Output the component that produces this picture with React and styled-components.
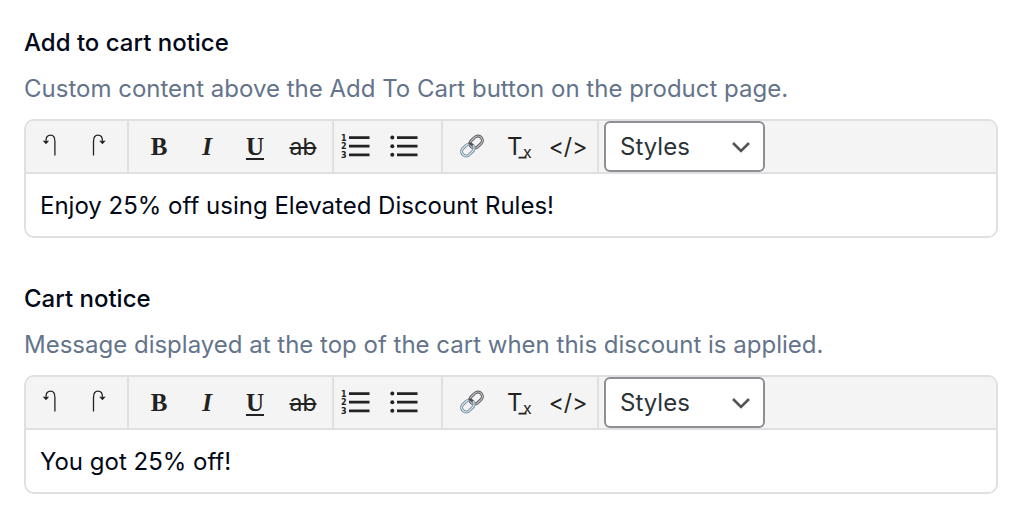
import { useId, useState } from "react";
import styled, { createGlobalStyle } from "styled-components";

const UndoIcon = () => (
    <Icon width="28" height="29" viewBox="0 0 28 29">
        <path d="M18.9 23.5V9.5C18.9 5.5 17.2 3.2 14.7 3.2C12 3.2 10 5.2 10 8.8" strokeWidth="1.3" />
        <path d="M6.7 8.8H13.1L10 12.3Z" fill="currentColor" stroke="none" />
    </Icon>
)

const RedoIcon = () => (
    <Icon width="28" height="29" viewBox="0 0 28 29">
        <path d="M9.5 23.5V9.5C9.5 5.5 11.5 3.2 14 3.2C16.7 3.2 18.4 5.2 18.4 8.8" strokeWidth="1.3" />
        <path d="M15.3 8.8H21.7L18.4 12.3Z" fill="currentColor" stroke="none" />
    </Icon>
)

const OrderedIcon = () => (
    <Icon width="36" height="29" viewBox="0 0 36 29">
        <path d="M9 5.6H29.5M9 14.2H29.5M9 22.8H29.5" strokeWidth="2.8" />
        <g fill="currentColor" stroke="none" fontFamily="DejaVu Sans, sans-serif" fontWeight="700" fontSize="8">
            <text x="1" y="9">1</text>
            <text x="1" y="17">2</text>
            <text x="1" y="26">3</text>
        </g>
    </Icon>
)

const BulletIcon = () => (
    <Icon width="36" height="29" viewBox="0 0 36 29">
        <path d="M9 5.6H29.5M9 14.2H29.5M9 22.8H29.5" strokeWidth="2.8" />
        <g fill="currentColor" stroke="none">
            <circle cx="4.3" cy="5.6" r="2" />
            <circle cx="4.3" cy="14.2" r="2" />
            <circle cx="4.3" cy="22.8" r="2" />
        </g>
    </Icon>
)

const LinkIcon = () => (
    <Icon width="28" height="29" viewBox="0 0 28 29">
        <g transform="rotate(-43 14 14)">
            <rect x="13" y="9.6" width="13.5" height="8.8" rx="4.4" stroke="#5c5552" strokeWidth="3" />
            <rect x="13" y="9.6" width="13.5" height="8.8" rx="4.4" stroke="#b3bcc4" strokeWidth="1.4" />
            <rect x="1.5" y="9.6" width="13.5" height="8.8" rx="4.4" stroke="#70808c" strokeWidth="3" />
            <rect x="1.5" y="9.6" width="13.5" height="8.8" rx="4.4" stroke="#c8dcea" strokeWidth="1.6" />
            <path d="M13 9.8C14.5 10.5 15.2 12 15 14" stroke="#454b50" strokeWidth="2" />
        </g>
    </Icon>
)

const ClearIcon = () => (
    <Icon width="30" height="31" viewBox="0 0 30 31">
        <path d="M13.5 26.6H21.5" strokeWidth="1.8" />
        <g fill="currentColor" stroke="none" fontFamily="Inter, sans-serif">
            <text x="2" y="24" fontSize="24">T</text>
            <text x="18" y="27" fontSize="16">x</text>
        </g>
    </Icon>
)

const NoticeField = ({ title, description, initial }) => {
    const id = useId();
    const [value, setValue] = useState(initial);

    return (
        <Field>
            <Label htmlFor={id}>{title}</Label>
            <Description id={`${id}-hint`}>{description}</Description>
            <Editor>
                <Toolbar role="toolbar" aria-label={`${title} formatting`}>
                    {tools.map(({ name, padding, items }) => (
                        <Group key={name} $padding={padding}>
                            {items.map((tool) => (
                                <Tool key={tool.label} type="button" aria-label={tool.label}>
                                    {tool.content}
                                </Tool>
                            ))}
                        </Group>
                    ))}
                    <SelectWrap>
                        <Select aria-label="Styles" defaultValue="styles">
                            <option value="styles">Styles</option>
                        </Select>
                        <Chevron width="20" height="12" viewBox="0 0 20 12">
                            <path d="M2 2L10 10L18 2" />
                        </Chevron>
                    </SelectWrap>
                </Toolbar>
                <Content
                    id={id}
                    rows={1}
                    aria-describedby={`${id}-hint`}
                    value={value}
                    onChange={(e) => setValue(e.target.value)}
                />
            </Editor>
        </Field>
    );
}

const App = () => {
    return (
        <Page>
            <GlobalStyle />
            <NoticeField
                title="Add to cart notice"
                description="Custom content above the Add To Cart button on the product page."
                initial="Enjoy 25% off using Elevated Discount Rules!"
            />
            <NoticeField
                title="Cart notice"
                description="Message displayed at the top of the cart when this discount is applied."
                initial="You got 25% off!"
            />
        </Page>
    );
}

export default App;


const GlobalStyle = createGlobalStyle`
* {
    box-sizing: border-box;
}
body {
    margin: 0;
    background: #fff;
    color: #020817;
    font-family: Inter, "Liberation Sans", sans-serif;
    font-size: 24px;
}
`

const Page = styled.main`
display: flex;
flex-direction: column;
gap: 44px;
padding: 26px 26px 24px 24px;
`

const Field = styled.div`
display: flex;
flex-direction: column;
`

const Label = styled.label`
font-size: 24px;
font-weight: 500;
line-height: 34px;
`

const Description = styled.p`
margin: 12px 0 13px;
color: #64748b;
font-size: 24px;
line-height: 34px;
`

const Editor = styled.div`
border: 2px solid #e0e0e0;
border-radius: 10px;
overflow: hidden;
`

const Toolbar = styled.div`
display: flex;
background: #f4f4f4;
border-bottom: 2px solid #e0e0e0;
`

const Group = styled.div`
display: flex;
align-items: center;
padding: ${(p) => p.$padding};
border-right: 2px solid #e0e0e0;
`

const Tool = styled.button`
display: flex;
align-items: center;
justify-content: center;
width: 48px;
height: 51px;
padding: 0;
border: 0;
background: none;
color: #222;
font-family: inherit;
cursor: pointer;
&:hover{
    background: #e8e8e8;
}
`

const Icon = styled.svg`
fill: none;
stroke: currentColor;
`

const Letter = styled.strong`
font-family: "Liberation Serif", serif;
font-size: 25px;
font-weight: 700;
text-decoration-thickness: 2px;
text-underline-offset: 3px;
`

const Strike = styled.s`
font-size: 23px;
text-decoration-thickness: 2px;
`

const Code = styled.span`
font-size: 23px;
`

const SelectWrap = styled.div`
position: relative;
margin-left: 5px;
`

const Select = styled.select`
display: block;
appearance: none;
width: 161px;
height: 51px;
padding: 0 48px 0 14px;
border: 2px solid #8c8f94;
border-radius: 6px;
background: #fff;
color: #2c3338;
font-family: inherit;
font-size: 24px;
`

const Chevron = styled.svg`
position: absolute;
top: 20px;
right: 14px;
fill: none;
stroke: #555;
stroke-width: 2.6;
pointer-events: none;
`

const Content = styled.textarea`
display: block;
width: 100%;
height: 62px;
padding: 15px 14px 13px;
border: 0;
outline: 0;
resize: none;
background: #fff;
color: #020817;
font-family: inherit;
font-size: 24px;
line-height: 34px;
`

const tools = [
    {
        name: "history",
        padding: "0 5px 0 0",
        items: [
            { label: "Undo", content: <UndoIcon /> },
            { label: "Redo", content: <RedoIcon /> },
        ],
    },
    {
        name: "inline",
        padding: "0 5px 0 6px",
        items: [
            { label: "Bold", content: <Letter>B</Letter> },
            { label: "Italic", content: <Letter as="em">I</Letter> },
            { label: "Underline", content: <Letter as="u">U</Letter> },
            { label: "Strikethrough", content: <Strike>ab</Strike> },
        ],
    },
    {
        name: "lists",
        padding: "0 11px 0 0",
        items: [
            { label: "Numbered list", content: <OrderedIcon /> },
            { label: "Bullet list", content: <BulletIcon /> },
        ],
    },
    {
        name: "insert",
        padding: "0 5px",
        items: [
            { label: "Link", content: <LinkIcon /> },
            { label: "Clear formatting", content: <ClearIcon /> },
            { label: "Source code", content: <Code>&lt;/&gt;</Code> },
        ],
    },
]
